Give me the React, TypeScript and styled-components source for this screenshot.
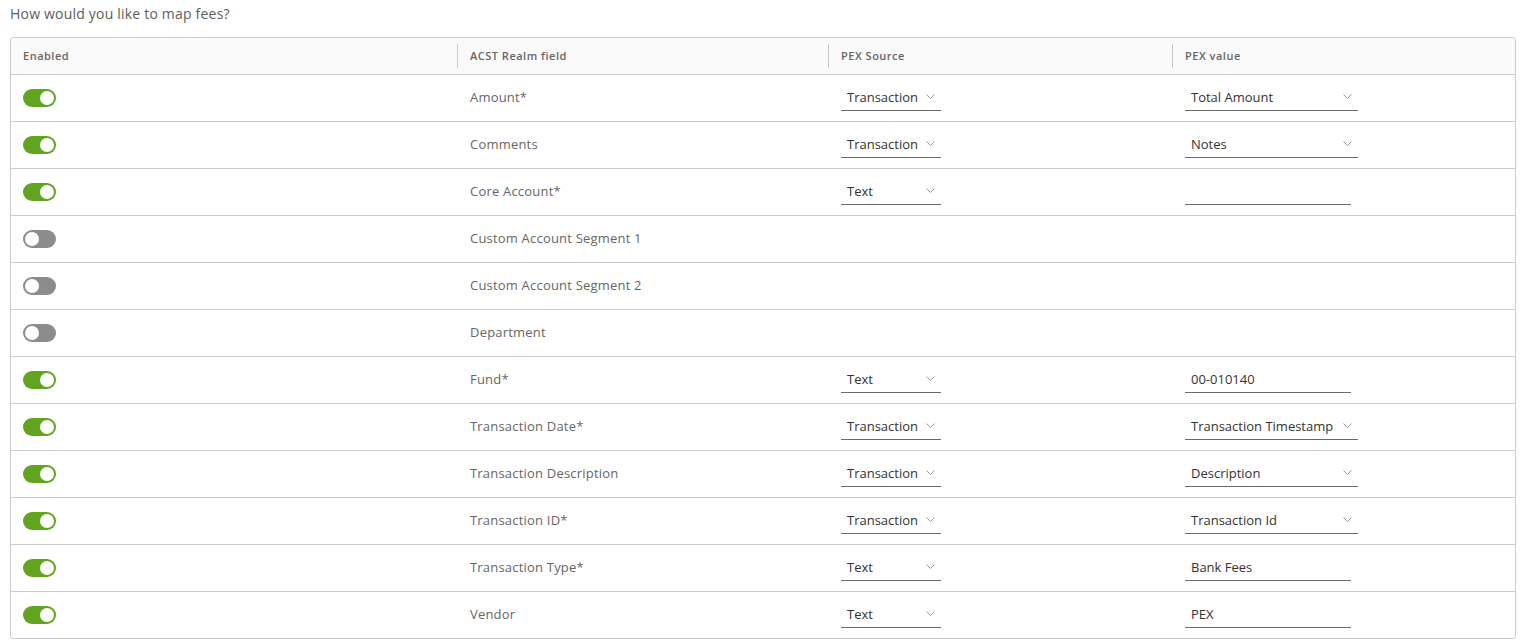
import styled, {createGlobalStyle} from 'styled-components';

interface Mapping {
    enabled: boolean
    field: string
    source?: string
    value?: string
    kind?: 'select' | 'input'
}

const rows: Mapping[] = [
    {enabled: true, field: 'Amount*', source: 'Transaction', value: 'Total Amount', kind: 'select'},
    {enabled: true, field: 'Comments', source: 'Transaction', value: 'Notes', kind: 'select'},
    {enabled: true, field: 'Core Account*', source: 'Text', value: '', kind: 'input'},
    {enabled: false, field: 'Custom Account Segment 1'},
    {enabled: false, field: 'Custom Account Segment 2'},
    {enabled: false, field: 'Department'},
    {enabled: true, field: 'Fund*', source: 'Text', value: '00-010140', kind: 'input'},
    {enabled: true, field: 'Transaction Date*', source: 'Transaction', value: 'Transaction Timestamp', kind: 'select'},
    {enabled: true, field: 'Transaction Description', source: 'Transaction', value: 'Description', kind: 'select'},
    {enabled: true, field: 'Transaction ID*', source: 'Transaction', value: 'Transaction Id', kind: 'select'},
    {enabled: true, field: 'Transaction Type*', source: 'Text', value: 'Bank Fees', kind: 'input'},
    {enabled: true, field: 'Vendor', source: 'Text', value: 'PEX', kind: 'input'},
];

const Chevron = () => (
    <svg width="9" height="5" viewBox="0 0 9 5" fill="none">
        <path d="M0.5 0.5l4 4 4-4" stroke="#9a9a9a" strokeWidth="1"/>
    </svg>
);

const App = () => {
    return (
        <Page>
            <GlobalStyle/>
            <Title>How would you like to map fees?</Title>
            <Table>
                <HeaderRow>
                    <HeadCell>Enabled</HeadCell>
                    <HeadCell $divider>ACST Realm field</HeadCell>
                    <HeadCell $divider>PEX Source</HeadCell>
                    <HeadCell $divider>PEX value</HeadCell>
                </HeaderRow>
                {rows.map((row) => (
                    <Row key={row.field}>
                        <Cell>
                            <Toggle $on={row.enabled}><span/></Toggle>
                        </Cell>
                        <Cell><FieldName>{row.field}</FieldName></Cell>
                        <Cell>
                            {row.source && (
                                <Select $width={100}>
                                    <span>{row.source}</span>
                                    <Chevron/>
                                </Select>
                            )}
                        </Cell>
                        <Cell>
                            {row.kind === 'select' && (
                                <Select $width={173}>
                                    <span>{row.value}</span>
                                    <Chevron/>
                                </Select>
                            )}
                            {row.kind === 'input' && (
                                <TextInput>{row.value}</TextInput>
                            )}
                        </Cell>
                    </Row>
                ))}
            </Table>
        </Page>
    );
}

const GlobalStyle = createGlobalStyle`
    body {
        margin: 0;
        background: #fff;
        font-family: "Open Sans", Lato, sans-serif;
    }
`;

const Page = styled.div`
    padding: 4px 9px 0 10px;
`;

const Title = styled.div`
    font-size: 14px;
    color: #5d5d5d;
    height: 19px;
    line-height: 19px;
    margin-bottom: 14px;
    letter-spacing: 0.2px;
`;

const Table = styled.div`
    border: 1px solid #ccc;
    border-radius: 3px;
    overflow: hidden;
`;

const grid = `
    display: grid;
    grid-template-columns: 446px 371px 344px 1fr;
`;

const HeaderRow = styled.div`
    ${grid}
    height: 36px;
    background: #fafafa;
    border-bottom: 1px solid #ccc;
    align-items: center;
`;

const HeadCell = styled.div<{$divider?: boolean}>`
    font-size: 11px;
    font-weight: 600;
    color: #666;
    padding-left: 12px;
    height: 24px;
    line-height: 24px;
    letter-spacing: 0.5px;
    border-left: ${p => p.$divider ? '1px solid #ccc' : 'none'};
`;

const Row = styled.div`
    ${grid}
    height: 46px;
    align-items: center;
    border-bottom: 1px solid #ccc;
    &:last-child {
        border-bottom: none;
    }
`;

const Cell = styled.div`
    padding-left: 12px;
    display: flex;
    align-items: center;
    &:nth-child(n+2) {
        padding-left: 13px;
    }
`;

const Toggle = styled.div<{$on: boolean}>`
    width: 33px;
    height: 18px;
    border-radius: 9px;
    background: ${p => p.$on ? '#62a420' : '#8c8c8c'};
    position: relative;
    span {
        position: absolute;
        top: 2px;
        left: ${p => p.$on ? '17px' : '2px'};
        width: 14px;
        height: 14px;
        border-radius: 50%;
        background: #fff;
        box-shadow: ${p => p.$on ? 'none' : '0 0 0 1px #8c8c8c'};
    }
`;

const FieldName = styled.span`
    font-size: 13px;
    color: #666;
    margin-top: -2px;
    letter-spacing: 0.2px;
`;

const Select = styled.div<{$width: number}>`
    width: ${p => p.$width}px;
    height: 24px;
    box-sizing: border-box;
    border-bottom: 1px solid #6a6a6a;
    display: flex;
    align-items: center;
    justify-content: space-between;
    padding: 0 6px 4px 6px;
    margin-top: 2px;
    font-size: 13px;
    color: #333;
`;

const TextInput = styled.div`
    width: 166px;
    height: 24px;
    box-sizing: border-box;
    border-bottom: 1px solid #6a6a6a;
    padding: 0 0 4px 6px;
    margin-top: 2px;
    display: flex;
    align-items: center;
    font-size: 13px;
    color: #333;
`;

export default App;
